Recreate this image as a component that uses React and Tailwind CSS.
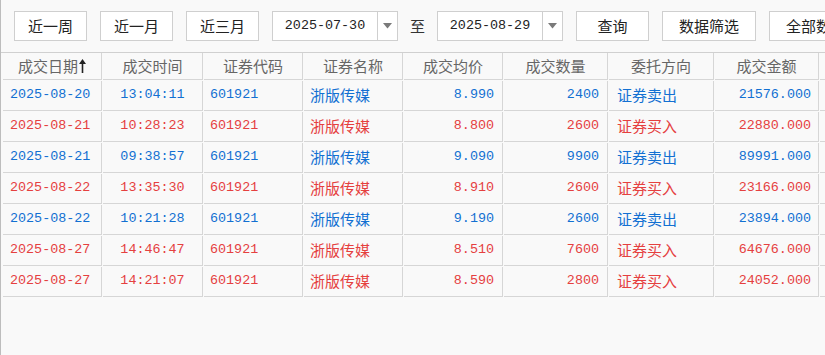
import React from 'react';

// ─── Trade records ────────────────────────────────────────────────────────────
const ROWS = [
  { date: '2025-08-20', time: '13:04:11', price: '8.990', qty: '2400', dir: '证券卖出', amount: '21576.000', sell: true },
  { date: '2025-08-21', time: '10:28:23', price: '8.800', qty: '2600', dir: '证券买入', amount: '22880.000', sell: false },
  { date: '2025-08-21', time: '09:38:57', price: '9.090', qty: '9900', dir: '证券卖出', amount: '89991.000', sell: true },
  { date: '2025-08-22', time: '13:35:30', price: '8.910', qty: '2600', dir: '证券买入', amount: '23166.000', sell: false },
  { date: '2025-08-22', time: '10:21:28', price: '9.190', qty: '2600', dir: '证券卖出', amount: '23894.000', sell: true },
  { date: '2025-08-27', time: '14:46:47', price: '8.510', qty: '7600', dir: '证券买入', amount: '64676.000', sell: false },
  { date: '2025-08-27', time: '14:21:07', price: '8.590', qty: '2800', dir: '证券买入', amount: '24052.000', sell: false },
];

// last column runs past the window edge, its title is off-screen
const HEADERS = ['成交日期', '成交时间', '证券代码', '证券名称', '成交均价', '成交数量', '委托方向', '成交金额', ''];

const CJK = "font-['Noto_Sans_CJK_SC',sans-serif] text-[15px] leading-none";
const MONO = "font-['Liberation_Mono','Noto_Sans_CJK_SC',monospace] text-[13.4px]";

function Button({ children, w = 'w-[73px]' }) {
  return (
    <button
      className={`${w} h-[30px] shrink-0 border border-[#cfcfcf] bg-white text-[#222] ${CJK} pb-[1px] flex items-center justify-center`}
    >
      {children}
    </button>
  );
}

function DateBox({ value }) {
  return (
    <div className="w-[126px] h-[30px] shrink-0 border border-[#cfcfcf] bg-white flex">
      <div className={`flex-1 flex items-center justify-center text-[#222] ${MONO}`}>{value}</div>
      <div className="w-[20px] border-l border-[#cfcfcf] flex items-center justify-center">
        <svg width="9" height="6" viewBox="0 0 9 6">
          <path d="M0 0h9L4.5 5.5z" fill="#7a7a7a" />
        </svg>
      </div>
    </div>
  );
}

function SortArrow() {
  return (
    <svg width="7" height="14" viewBox="0 0 7 14" className="ml-[1px]">
      <path d="M3.5 0L7 5H4.3v9H2.7V5H0z" fill="#222" />
    </svg>
  );
}

export default function App() {
  const cell = 'h-[30px] border-r border-b border-[#d6d6d6] flex items-center overflow-hidden whitespace-nowrap';

  return (
    <div className="w-[825px] h-[355px] overflow-hidden bg-[#f9f9f9] border-l border-[#bdbdbd]">
      {/* ── Toolbar ── */}
      <div className="h-[52px] pt-[11px] pl-[13px] flex items-start gap-[13px] overflow-hidden">
        <Button>近一周</Button>
        <Button>近一月</Button>
        <Button>近三月</Button>
        <DateBox value="2025-07-30" />
        <span className={`h-[30px] pb-[1px] flex items-center text-[#333] ${CJK} -ml-[1px]`}>至</span>
        <div className="-ml-[1px]">
          <DateBox value="2025-08-29" />
        </div>
        <Button>查询</Button>
        <Button w="w-[94px]">数据筛选</Button>
        <Button w="w-[94px]">全部数据</Button>
      </div>

      {/* ── Table ── */}
      <div className="border-t border-[#d0d0d0] pl-[2px]">
        <div className="grid grid-cols-[99px_100px_99px_99px_99px_104px_105px_104px_100px] gap-px w-max">
          {HEADERS.map((h, i) => (
            <div
              key={i}
              className={`h-[27px] pb-[1px] border-r border-b border-[#d6d6d6] flex items-center justify-center text-[#666] ${CJK} whitespace-nowrap`}
            >
              {h}
              {i === 0 && <SortArrow />}
            </div>
          ))}

          {ROWS.map((r, idx) => {
            const color = r.sell ? 'text-[#1270d2]' : 'text-[#e5403f]';
            return (
              <React.Fragment key={idx}>
                <div className={`${cell} ${color} ${MONO} pl-[7px]`}>{r.date}</div>
                <div className={`${cell} ${color} ${MONO} justify-center`}>{r.time}</div>
                <div className={`${cell} ${color} ${MONO} pl-[6px]`}>601921</div>
                <div className={`${cell} ${color} ${CJK} pl-[6px] pb-[2px]`}>浙版传媒</div>
                <div className={`${cell} ${color} ${MONO} justify-end pr-[8px]`}>{r.price}</div>
                <div className={`${cell} ${color} ${MONO} justify-end pr-[8px]`}>{r.qty}</div>
                <div className={`${cell} ${color} ${CJK} pl-[8px] pb-[2px]`}>{r.dir}</div>
                <div className={`${cell} ${color} ${MONO} justify-end pr-[7px]`}>{r.amount}</div>
                <div className={cell} />
              </React.Fragment>
            );
          })}
        </div>
      </div>
    </div>
  );
}
